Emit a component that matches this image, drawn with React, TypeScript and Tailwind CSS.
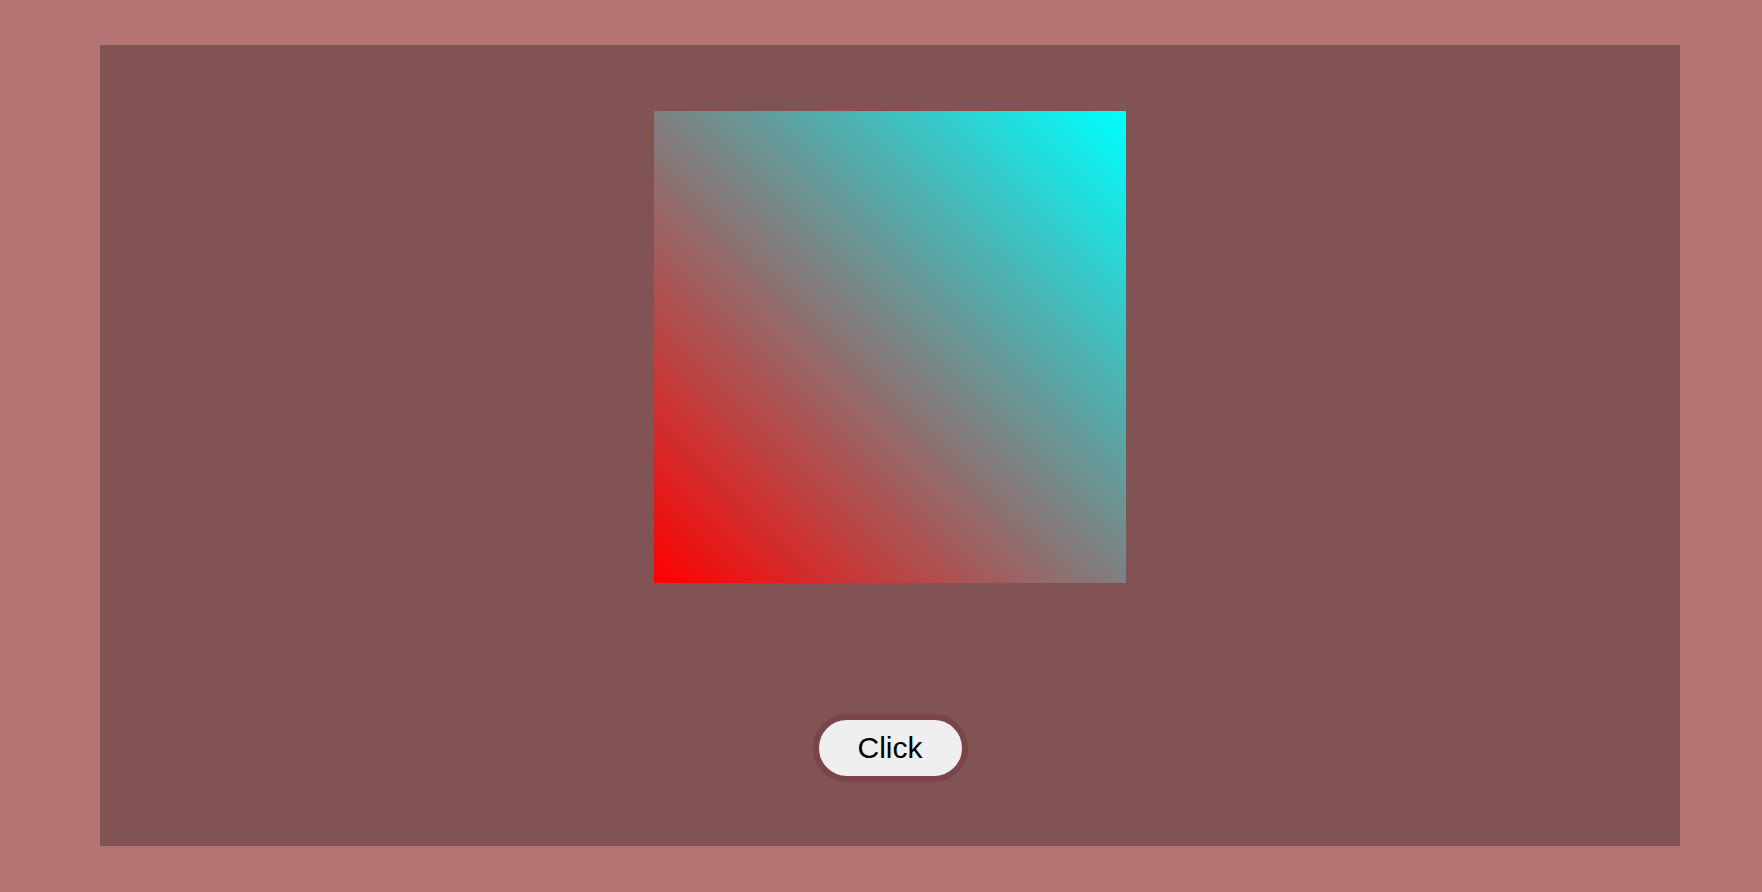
export default function App() {
  return (
    <div className="h-[892px] w-full bg-[#b57473] pt-[45px] pb-[46px] pl-[100px] pr-[82px]">
      <div className="h-full w-full bg-[#825354] flex flex-col items-center pt-[66px]">
        <div className="w-[472px] h-[472px] bg-[linear-gradient(to_top_right,#ff0000,#00ffff)]" />
        <button className="mt-[131px] h-[68px] w-[155px] rounded-full border-[6px] border-[#7a4548] bg-[#efefef] text-[30px] text-black font-['Liberation_Sans',Arial,sans-serif] leading-none">
          Click
        </button>
      </div>
    </div>
  );
}
